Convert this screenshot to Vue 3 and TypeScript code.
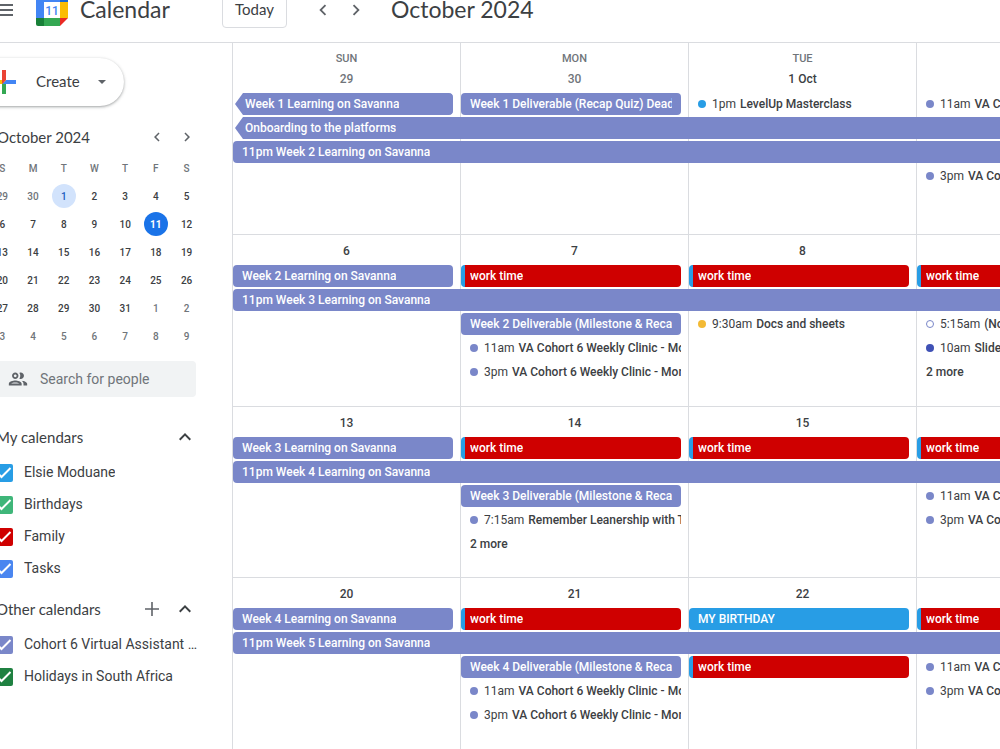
<script setup lang="ts">
import { ref } from 'vue'

type Kind = 'bar' | 'dot' | 'more'

interface CalEvent {
  kind: Kind
  col: number
  row: number
  span?: number
  tone?: string
  time?: string
  title: string
  continued?: boolean
}

interface Week {
  days: { name?: string; label: string; muted?: boolean }[]
  events: CalEvent[]
}

interface CalendarItem {
  id: string
  label: string
  tone: string
  checked: boolean
}

const clinic = 'VA Cohort 6 Weekly Clinic - Monday'

const weeks: Week[] = [
  {
    days: [
      { name: 'SUN', label: '29', muted: true },
      { name: 'MON', label: '30', muted: true },
      { name: 'TUE', label: '1 Oct' },
      { label: '' },
    ],
    events: [
      { kind: 'bar', col: 1, row: 1, tone: 'indigo', title: 'Week 1 Learning on Savanna', continued: true },
      { kind: 'bar', col: 2, row: 1, tone: 'indigo', title: 'Week 1 Deliverable (Recap Quiz) Deadline' },
      { kind: 'dot', col: 3, row: 1, tone: 'blue', time: '1pm', title: 'LevelUp Masterclass' },
      { kind: 'dot', col: 4, row: 1, tone: 'indigo', time: '11am', title: clinic },
      { kind: 'bar', col: 1, row: 2, span: 4, tone: 'indigo', title: 'Onboarding to the platforms', continued: true },
      { kind: 'bar', col: 1, row: 3, span: 4, tone: 'indigo', title: '11pm Week 2 Learning on Savanna' },
      { kind: 'dot', col: 4, row: 4, tone: 'indigo', time: '3pm', title: clinic },
    ],
  },
  {
    days: [{ label: '6' }, { label: '7' }, { label: '8' }, { label: '' }],
    events: [
      { kind: 'bar', col: 1, row: 1, tone: 'indigo', title: 'Week 2 Learning on Savanna' },
      { kind: 'bar', col: 2, row: 1, tone: 'red', title: 'work time' },
      { kind: 'bar', col: 3, row: 1, tone: 'red', title: 'work time' },
      { kind: 'bar', col: 4, row: 1, tone: 'red', title: 'work time' },
      { kind: 'bar', col: 1, row: 2, span: 4, tone: 'indigo', title: '11pm Week 3 Learning on Savanna' },
      { kind: 'bar', col: 2, row: 3, tone: 'indigo', title: 'Week 2 Deliverable (Milestone & Recap Quiz)' },
      { kind: 'dot', col: 3, row: 3, tone: 'amber', time: '9:30am', title: 'Docs and sheets' },
      { kind: 'dot', col: 4, row: 3, tone: 'hollow', time: '5:15am', title: '(No title)' },
      { kind: 'dot', col: 2, row: 4, tone: 'indigo', time: '11am', title: clinic },
      { kind: 'dot', col: 4, row: 4, tone: 'navy', time: '10am', title: 'Slides' },
      { kind: 'dot', col: 2, row: 5, tone: 'indigo', time: '3pm', title: clinic },
      { kind: 'more', col: 4, row: 5, title: '2 more' },
    ],
  },
  {
    days: [{ label: '13' }, { label: '14' }, { label: '15' }, { label: '' }],
    events: [
      { kind: 'bar', col: 1, row: 1, tone: 'indigo', title: 'Week 3 Learning on Savanna' },
      { kind: 'bar', col: 2, row: 1, tone: 'red', title: 'work time' },
      { kind: 'bar', col: 3, row: 1, tone: 'red', title: 'work time' },
      { kind: 'bar', col: 4, row: 1, tone: 'red', title: 'work time' },
      { kind: 'bar', col: 1, row: 2, span: 4, tone: 'indigo', title: '11pm Week 4 Learning on Savanna' },
      { kind: 'bar', col: 2, row: 3, tone: 'indigo', title: 'Week 3 Deliverable (Milestone & Recap Quiz)' },
      { kind: 'dot', col: 4, row: 3, tone: 'indigo', time: '11am', title: clinic },
      { kind: 'dot', col: 2, row: 4, tone: 'indigo', time: '7:15am', title: 'Remember Leanership with Team' },
      { kind: 'dot', col: 4, row: 4, tone: 'indigo', time: '3pm', title: clinic },
      { kind: 'more', col: 2, row: 5, title: '2 more' },
    ],
  },
  {
    days: [{ label: '20' }, { label: '21' }, { label: '22' }, { label: '' }],
    events: [
      { kind: 'bar', col: 1, row: 1, tone: 'indigo', title: 'Week 4 Learning on Savanna' },
      { kind: 'bar', col: 2, row: 1, tone: 'red', title: 'work time' },
      { kind: 'bar', col: 3, row: 1, tone: 'blue', title: 'MY BIRTHDAY' },
      { kind: 'bar', col: 4, row: 1, tone: 'red', title: 'work time' },
      { kind: 'bar', col: 1, row: 2, span: 4, tone: 'indigo', title: '11pm Week 5 Learning on Savanna' },
      { kind: 'bar', col: 2, row: 3, tone: 'indigo', title: 'Week 4 Deliverable (Milestone & Recap Quiz)' },
      { kind: 'bar', col: 3, row: 3, tone: 'red', title: 'work time' },
      { kind: 'dot', col: 4, row: 3, tone: 'indigo', time: '11am', title: clinic },
      { kind: 'dot', col: 2, row: 4, tone: 'indigo', time: '11am', title: clinic },
      { kind: 'dot', col: 4, row: 4, tone: 'indigo', time: '3pm', title: clinic },
      { kind: 'dot', col: 2, row: 5, tone: 'indigo', time: '3pm', title: clinic },
    ],
  },
]

const miniHead = ['S', 'M', 'T', 'W', 'T', 'F', 'S']
const miniWeeks = [
  [29, 30, 1, 2, 3, 4, 5],
  [6, 7, 8, 9, 10, 11, 12],
  [13, 14, 15, 16, 17, 18, 19],
  [20, 21, 22, 23, 24, 25, 26],
  [27, 28, 29, 30, 31, 1, 2],
  [3, 4, 5, 6, 7, 8, 9],
]

function miniClass(week: number, day: number) {
  const outside = (week === 0 && day > 20) || (week >= 4 && day < 20)
  return {
    outside,
    selected: week === 0 && day === 1,
    today: week === 1 && day === 11,
  }
}

const mine = ref<CalendarItem[]>([
  { id: 'elsie', label: 'Elsie Moduane', tone: 'blue', checked: true },
  { id: 'birthdays', label: 'Birthdays', tone: 'green', checked: true },
  { id: 'family', label: 'Family', tone: 'red', checked: true },
  { id: 'tasks', label: 'Tasks', tone: 'azure', checked: true },
])
const others = ref<CalendarItem[]>([
  { id: 'cohort', label: 'Cohort 6 Virtual Assistant Programme', tone: 'indigo', checked: true },
  { id: 'holidays', label: 'Holidays in South Africa', tone: 'forest', checked: true },
])
const groups = [
  { title: 'My calendars', items: mine, canAdd: false },
  { title: 'Other calendars', items: others, canAdd: true },
]
const search = ref('')

function place(e: CalEvent) {
  return { gridColumn: `${e.col} / span ${e.span ?? 1}`, gridRow: String(e.row + 1) }
}
</script>

<template>
  <div class="viewport">
    <div class="page">
      <header class="topbar">
        <div class="brand">
          <button class="icon-btn" aria-label="Main menu">
            <svg width="24" height="24" viewBox="0 0 24 24"><path fill="#5f6368" d="M3 18h18v-2H3v2zm0-5h18v-2H3v2zm0-7v2h18V6H3z" /></svg>
          </button>
          <svg class="logo" width="32" height="32" viewBox="0 0 32 32" aria-hidden="true">
            <path fill="#4285f4" d="M2 0h22v8H8v16H0V2a2 2 0 0 1 2-2z" />
            <path fill="#1967d2" d="M24 0h6a2 2 0 0 1 2 2v6h-8z" />
            <path fill="#fbbc04" d="M24 8h8v16h-8z" />
            <path fill="#34a853" d="M8 24h16v8H8z" />
            <path fill="#188038" d="M0 24h8v8H2a2 2 0 0 1-2-2z" />
            <path fill="#ea2a24" d="M24 24h8l-8 8z" />
            <path fill="#fff" d="M8 8h16v16H8z" />
            <text x="16" y="21" text-anchor="middle" font-family="Roboto, sans-serif" font-size="12" font-weight="500" fill="#4285f4">11</text>
          </svg>
          <span class="product">Calendar</span>
        </div>
        <button class="today-btn">Today</button>
        <div class="pager">
          <button class="icon-btn" aria-label="Previous month">
            <svg width="22" height="22" viewBox="0 0 24 24"><path fill="#5f6368" d="M15.41 7.41 14 6l-6 6 6 6 1.41-1.41L10.83 12z" /></svg>
          </button>
          <button class="icon-btn" aria-label="Next month">
            <svg width="22" height="22" viewBox="0 0 24 24"><path fill="#5f6368" d="M10 6 8.59 7.41 13.17 12l-4.58 4.59L10 18l6-6z" /></svg>
          </button>
        </div>
        <h1 class="period">October 2024</h1>
      </header>

      <div class="body">
        <aside class="sidebar">
          <button class="create">
            <svg width="36" height="36" viewBox="0 0 36 36" aria-hidden="true">
              <path fill="#34a853" d="M16 16v14h4V20z" />
              <path fill="#4285f4" d="M30 16H20l-4 4h14z" />
              <path fill="#fbbc05" d="M6 16v4h10l4-4z" />
              <path fill="#ea4335" d="M20 16V6h-4v14z" />
            </svg>
            <span class="create-label">Create</span>
            <svg width="20" height="20" viewBox="0 0 20 20" aria-hidden="true"><path fill="#5f6368" d="M6 8l4 4 4-4z" /></svg>
          </button>

          <section class="mini">
            <div class="mini-bar">
              <h2 class="mini-title">October 2024</h2>
              <button class="icon-btn step" aria-label="Previous">
                <svg width="18" height="18" viewBox="0 0 24 24"><path fill="#5f6368" d="M15.41 7.41 14 6l-6 6 6 6 1.41-1.41L10.83 12z" /></svg>
              </button>
              <button class="icon-btn step" aria-label="Next">
                <svg width="18" height="18" viewBox="0 0 24 24"><path fill="#5f6368" d="M10 6 8.59 7.41 13.17 12l-4.58 4.59L10 18l6-6z" /></svg>
              </button>
            </div>
            <table class="mini-table">
              <thead>
                <tr><th v-for="(d, i) in miniHead" :key="i" scope="col">{{ d }}</th></tr>
              </thead>
              <tbody>
                <tr v-for="(w, wi) in miniWeeks" :key="wi">
                  <td v-for="d in w" :key="d"><button class="mini-day" :class="miniClass(wi, d)">{{ d }}</button></td>
                </tr>
              </tbody>
            </table>
          </section>

          <label class="people">
            <svg width="22" height="22" viewBox="0 0 24 24" aria-hidden="true"><path fill="#5f6368" d="M9 13.75c-2.34 0-7 1.17-7 3.5V19h14v-1.75c0-2.33-4.66-3.5-7-3.5zM4.34 17c.84-.58 2.87-1.25 4.66-1.25s3.82.67 4.66 1.25H4.34zM9 12c1.93 0 3.5-1.57 3.5-3.5S10.93 5 9 5 5.5 6.57 5.5 8.5 7.07 12 9 12zm0-5c.83 0 1.5.67 1.5 1.5S9.83 10 9 10s-1.5-.67-1.5-1.5S8.17 7 9 7zm7.04 6.81c1.16.84 1.96 1.96 1.96 3.44V19h4v-1.75c0-2.02-3.5-3.17-5.96-3.44zM15 12c1.93 0 3.5-1.57 3.5-3.5S16.93 5 15 5c-.54 0-1.04.13-1.5.35.63.89 1 1.98 1 3.15s-.37 2.26-1 3.15c.46.22.96.35 1.5.35z" /></svg>
            <input v-model="search" type="text" placeholder="Search for people" aria-label="Search for people" />
          </label>

          <section v-for="g in groups" :key="g.title" class="group">
            <div class="group-bar">
              <h2 class="group-title">{{ g.title }}</h2>
              <button v-if="g.canAdd" class="icon-btn group-btn" aria-label="Add other calendars">
                <svg width="24" height="24" viewBox="0 0 24 24"><path fill="#5f6368" d="M19 12.8h-6.2V19h-1.6v-6.2H5v-1.6h6.2V5h1.6v6.2H19z" /></svg>
              </button>
              <button class="icon-btn group-btn" :aria-label="`Collapse ${g.title}`">
                <svg width="24" height="24" viewBox="0 0 24 24"><path fill="#3c4043" d="M12 8l-6 6 1.41 1.41L12 10.83l4.59 4.58L18 14z" /></svg>
              </button>
            </div>
            <label v-for="c in g.items.value" :key="c.id" class="cal-row">
              <input v-model="c.checked" type="checkbox" class="cal-input" />
              <span class="box" :class="c.tone">
                <svg v-if="c.checked" width="18" height="18" viewBox="0 0 18 18" aria-hidden="true"><path fill="none" stroke="#fff" stroke-width="2" d="M2.500 9l4 4 9-9" /></svg>
              </span>
              <span class="cal-label">{{ c.label }}</span>
            </label>
          </section>
        </aside>

        <main class="month">
          <section v-for="(w, wi) in weeks" :key="wi" class="week" :class="{ first: wi === 0 }">
            <div v-for="(d, di) in w.days" :key="di" class="day" :style="{ gridColumn: String(di + 1) }">
              <span v-if="d.name" class="day-name">{{ d.name }}</span>
              <span class="day-num" :class="{ muted: d.muted }">{{ d.label }}</span>
            </div>
            <button
              v-for="(e, ei) in w.events"
              :key="ei"
              class="event"
              :class="[e.kind, e.tone, { continued: e.continued, cut: e.col + (e.span ?? 1) > 4 }]"
              :style="place(e)"
            >
              <span v-if="e.kind === 'dot'" class="pip"></span>
              <span class="text"><span v-if="e.time" class="time">{{ e.time }}</span>{{ e.title }}</span>
            </button>
          </section>
        </main>
      </div>
    </div>
  </div>
</template>

<style>
body {
  margin: 0;
  overflow: hidden;
  background: #fff;
}
</style>

<style scoped>
* {
  box-sizing: border-box;
}
button,
input {
  font: inherit;
  color: inherit;
  border: 0;
  padding: 0;
  margin: 0;
  background: none;
}
h1,
h2 {
  margin: 0;
  font-weight: 400;
}
.viewport {
  height: 100vh;
  overflow: hidden;
  font-family: Roboto, "Liberation Sans", sans-serif;
  color: #3c4043;
}
.page {
  display: flex;
  flex-direction: column;
  height: calc(100vh + 22px);
  margin: -22px 0 0 -32px;
}
.icon-btn {
  display: flex;
  align-items: center;
  justify-content: center;
}

/* Top bar */
.topbar {
  display: flex;
  align-items: center;
  flex: none;
  height: 65px;
  padding: 0 0 1px 24px;
  border-bottom: 1px solid #dadce0;
}
.brand {
  display: flex;
  align-items: center;
  width: 230px;
}
.logo {
  margin: 0 12px 0 20px;
}
.product {
  padding-bottom: 2px;
  font-family: Lato, sans-serif;
  font-size: 23px;
}
.today-btn {
  height: 36px;
  padding: 0 12px 2px;
  border: 1px solid #dadce0;
  border-radius: 4px;
  font-family: Lato, sans-serif;
  font-size: 15px;
}
.pager {
  display: flex;
  margin-left: 20px;
}
.pager .icon-btn {
  width: 33px;
  height: 32px;
}
.period {
  margin-left: 18px;
  padding-bottom: 2px;
  font-family: Lato, sans-serif;
  font-size: 23px;
}

/* Sidebar */
.body {
  display: flex;
  flex: 1;
  min-height: 0;
}
.sidebar {
  flex: none;
  width: 264px;
  padding-top: 15px;
}
.create {
  display: flex;
  align-items: center;
  height: 48px;
  margin-left: 8px;
  padding: 0 12px 0 10px;
  border-radius: 24px;
  box-shadow: 0 1px 2px rgba(60, 64, 67, 0.3), 0 1px 3px 1px rgba(60, 64, 67, 0.15);
}
.create-label {
  width: 56px;
  margin-left: 14px;
  padding-bottom: 2px;
  text-align: left;
  font-family: Lato, sans-serif;
  font-size: 15px;
}
.mini {
  width: 215px;
  margin: 16px 0 0 19px;
}
.mini-bar {
  display: flex;
  align-items: center;
  height: 30px;
  padding-left: 10px;
}
.mini-title {
  flex: 1;
  font-family: Lato, sans-serif;
  font-size: 15px;
}
.step {
  width: 30px;
  height: 30px;
}
.mini-table {
  width: 100%;
  margin-top: 2px;
  table-layout: fixed;
  border-collapse: collapse;
  font-size: 10px;
  font-weight: 500;
}
.mini-table th,
.mini-table td {
  height: 28px;
  padding: 0;
  text-align: center;
}
.mini-table th {
  font-weight: 500;
  color: #70757a;
}
.mini-day {
  width: 24px;
  height: 24px;
  border-radius: 50%;
}
.mini-day.outside {
  color: #70757a;
}
.mini-day.selected {
  background: #d2e3fc;
  color: #185abc;
}
.mini-day.today {
  background: #1a73e8;
  color: #fff;
  font-weight: 700;
}
.people {
  display: flex;
  align-items: center;
  gap: 11px;
  height: 36px;
  margin: 11px 36px 0 20px;
  padding-left: 19px;
  border-radius: 4px;
  background: #f1f3f4;
}
.people input {
  flex: 1;
  min-width: 0;
  font-size: 14px;
  outline: none;
}
.people input::placeholder {
  color: #70757a;
  opacity: 1;
}
.group {
  margin: 24px 31px 0 28px;
}
.group + .group {
  margin-top: 8px;
}
.group-bar {
  display: flex;
  align-items: center;
  height: 32px;
  margin-bottom: 4px;
}
.group-title {
  flex: 1;
  font-family: Lato, sans-serif;
  font-size: 15px;
}
.group-btn {
  width: 34px;
  height: 32px;
}
.group-btn:last-child {
  width: 32px;
}
.cal-row {
  display: flex;
  align-items: center;
  height: 32px;
}
.cal-input {
  width: 0;
  height: 0;
  appearance: none;
}
.box {
  flex: none;
  width: 18px;
  height: 18px;
  margin: 0 11px 0 -1px;
  border-radius: 2px;
}
.box svg {
  display: block;
}
.cal-label {
  padding-bottom: 2px;
  overflow: hidden;
  font-size: 14px;
  white-space: nowrap;
  text-overflow: ellipsis;
}

/* Palette */
.blue {
  --tone: #289de5;
}
.green {
  --tone: #3fb679;
}
.red {
  --tone: #cf0000;
}
.azure {
  --tone: #4a86f0;
}
.indigo {
  --tone: #7a87c9;
}
.forest {
  --tone: #1f8141;
}
.amber {
  --tone: #f3ba35;
}
.navy {
  --tone: #3f51b5;
}
.box {
  background: var(--tone);
}

/* Month grid */
.month {
  display: flex;
  flex: 1;
  flex-direction: column;
  min-width: 0;
}
.week {
  display: grid;
  flex: 1 0 0;
  grid-template-columns: repeat(3, minmax(0, 19fr)) minmax(0, 7fr);
  grid-template-rows: 28px repeat(5, 22px) 1fr;
  row-gap: 2px;
  min-height: 0;
  border-bottom: 1px solid #dadce0;
}
.week:last-child {
  border-bottom: 0;
}
.week.first {
  flex: none;
  height: 192px;
  grid-template-rows: 48px repeat(4, 22px) 1fr;
}
.day {
  display: flex;
  grid-row: 1 / -1;
  flex-direction: column;
  align-items: center;
  padding-top: 6px;
  border-left: 1px solid #dadce0;
  font-size: 12px;
  font-weight: 500;
  line-height: 20px;
}
.day-name {
  font-size: 11px;
  color: #70757a;
}
.day-num.muted {
  color: #70757a;
}
.event {
  display: flex;
  align-items: center;
  min-width: 0;
  margin: 0 7px 0 1px;
  font-size: 12px;
  font-weight: 500;
  text-align: left;
  white-space: nowrap;
}
.event.cut {
  margin-right: 0;
}
.text {
  overflow: hidden;
}
.bar {
  padding: 0 9px;
  border-radius: 4px;
  background: var(--tone);
  color: #fff;
}
.bar.cut {
  padding-right: 0;
  border-radius: 4px 0 0 4px;
}
.bar.red {
  padding-left: 5px;
  border-left: 4px solid #289de5;
}
.bar.continued {
  margin-left: 3px;
  padding-left: 10px;
  clip-path: polygon(0 50%, 8px 0, 100% 0, 100% 100%, 8px 100%);
}
.bar.continued:not(.cut) {
  clip-path: polygon(0 50%, 8px 0, calc(100% - 2px) 0, 100% 2px, 100% calc(100% - 2px), calc(100% - 2px) 100%, 8px 100%);
}
.dot,
.more {
  padding-left: 9px;
}
.pip {
  flex: none;
  width: 8px;
  height: 8px;
  margin-right: 6px;
  border-radius: 50%;
  background: var(--tone);
}
.hollow .pip {
  border: 1px solid #7a87c9;
  background: #fff;
}
.time {
  margin-right: 4px;
  font-weight: 400;
}
</style>
